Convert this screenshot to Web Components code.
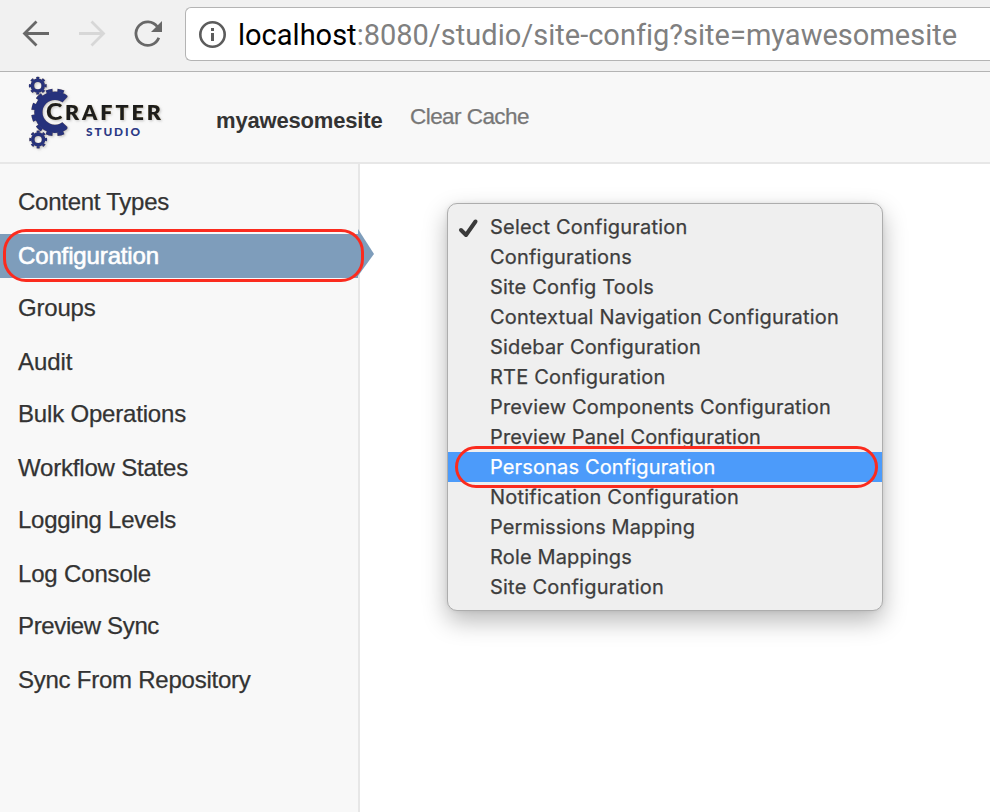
<!DOCTYPE html>
<html lang="en">
<head>
<meta charset="utf-8">
<title>Crafter Studio</title>
<style>
html,body{margin:0;height:812px;overflow:hidden;background:#fff}
</style>
</head>
<body>
<studio-page></studio-page>
<script>
const define = (name, html, extra) => customElements.define(name, class extends HTMLElement {
  constructor() {
    super();
    const t = document.createElement('template');
    t.innerHTML = html;
    this.attachShadow({mode: 'open'}).append(t.content.cloneNode(true));
  }
  connectedCallback() { if (extra) extra(this); }
});

// One line of text whose tracking is set so that it fills the given width.
define('tracked-text', `<style>
:host{display:inline-block;white-space:pre}
</style><span><slot></slot></span>`, el => {
  const want = parseFloat(el.getAttribute('width'));
  const span = el.shadowRoot.querySelector('span');
  requestAnimationFrame(() => {
    const n = el.textContent.length;
    span.style.letterSpacing = ((want - span.getBoundingClientRect().width) / n).toFixed(3) + 'px';
  });
});

define('highlight-ring', `<style>
:host{position:absolute;box-sizing:border-box;border:3px solid #fb2b1e;pointer-events:none;z-index:3}
</style>`);

define('browser-bar', `<style>
:host{display:flex;box-sizing:border-box;height:72px;background:#f1f1f1;border-bottom:1px solid #b4b4b4;padding:7px 0 0 0;font-family:Roboto,sans-serif}
svg{display:block;flex:none}
.nav{width:185px;height:54px}
.field{flex:1;display:flex;box-sizing:border-box;height:54px;background:#fff;border:1px solid #b4b4b4;border-right:0;border-radius:6px 0 0 6px;font-size:29px;line-height:54px;color:#808080}
.info{width:52px;height:52px}
b{font-weight:400;color:#000}
</style>
<svg class="nav" viewBox="0 7 185 54" fill="none" stroke-width="2.8">
<path d="M49 33.5H25M36.5 21.5L24.5 33.5L36.5 45.5" stroke="#686868"/>
<path d="M79 33.5H103M91.5 21.5L103.5 33.5L91.5 45.5" stroke="#d7d7d7"/>
<path d="M157.2 26.5A11.8 11.8 0 1 0 158.8 37.8" stroke="#686868" stroke-width="2.8"/>
<path d="M162 21V32H151Z" fill="#686868"/>
</svg>
<div class="field">
<svg class="info" viewBox="186 8 52 52"><circle cx="212.5" cy="34.5" r="12.2" fill="none" stroke="#5c5c5c" stroke-width="2.6"/><path d="M211 28h3v3h-3zM211 33h3v8h-3z" fill="#5c5c5c"/></svg>
<tracked-text width="718">​<b>localhost</b>:8080/studio/site-config?site=myawesomesite</tracked-text>
</div>`.replace('\u200b', ''));

define('crafter-logo', `<style>
:host{display:block;width:180px;height:90px}
svg{display:block}
text{font-family:Lato,sans-serif;font-weight:900}
</style>
<svg width="180" height="90" viewBox="0 72 180 90">
<defs>
<filter id="s" x="-20%" y="-20%" width="150%" height="150%"><feDropShadow dx="0" dy="0" stdDeviation=".6" flood-color="#9b8e62" flood-opacity=".8"/><feDropShadow dx="1.2" dy="1.2" stdDeviation=".8" flood-color="#777" flood-opacity=".35"/></filter>
<clipPath id="c"><path d="M25 80H64L67.5 97L61 104L55 112L61 121L67.5 127L64 145H25Z"/></clipPath>
</defs>
<g filter="url(#s)"><g fill="none" stroke="#28337b">
<g clip-path="url(#c)"><circle cx="55" cy="112.3" r="16.6" stroke-width="8.4"/><circle cx="55" cy="112.3" r="22" stroke-width="3.6" pathLength="120" stroke-dasharray="5.6 4.4" stroke-dashoffset="-2.2"/></g>
<circle cx="37.8" cy="85.7" r="5.4" stroke-width="3.6"/><circle cx="37.8" cy="85.7" r="7.8" stroke-width="2.2" pathLength="80" stroke-dasharray="5 5" stroke-dashoffset="2.5"/>
<circle cx="38.2" cy="139.5" r="5.4" stroke-width="3.6"/><circle cx="38.2" cy="139.5" r="7.8" stroke-width="2.2" pathLength="80" stroke-dasharray="5 5" stroke-dashoffset="2.5"/>
</g></g>
<g filter="url(#s)" fill="#1d1d1b"><text x="45.9" y="120" font-size="22.5" textLength="16.4" lengthAdjust="spacingAndGlyphs">C</text><text x="65" y="119.8" font-size="21.5" textLength="96" style="font-weight:800">RAFTER</text></g>
<text x="86" y="136.4" font-size="11.8" textLength="54" fill="#2b3a85">STUDIO</text>
</svg>`);

define('studio-header', `<style>
:host{display:flex;box-sizing:border-box;height:92px;background:#f8f8f8;border-bottom:2px solid #e7e7e7;font-family:"Liberation Sans",sans-serif;font-size:22px}
.logo{width:216px}
.site{font-weight:700;color:#333;width:194px;padding-top:36px;line-height:26px}
.cache{color:#777;padding-top:32px;line-height:26px;-webkit-text-stroke:.25px #777;font-size:22.5px}
</style>
<crafter-logo class="logo"></crafter-logo>
<div class="site"><tracked-text width="166.5">myawesomesite</tracked-text></div>
<div class="cache"><tracked-text width="119">Clear Cache</tracked-text></div>`);

define('nav-item', `<style>
:host{display:block;box-sizing:border-box;height:54px;padding:5px 0;color:#333;-webkit-text-stroke:.25px #333}
:host([short]){height:52px;padding:3px 0 5px}
div{position:relative;height:44px;line-height:44px;padding-left:18px}
:host([active]) div{background:#7e9dbb;color:#fff;-webkit-text-stroke:.6px #fff}
:host([active]) div::after{content:"";position:absolute;left:358px;top:-5px;width:16px;height:47px;background:#7e9dbb;clip-path:polygon(0 0,100% 53%,0 100%)}
</style><div><slot></slot></div>`);

define('side-nav', `<style>
:host{display:block;box-sizing:border-box;position:relative;width:360px;height:648px;background:#f8f8f8;border-right:2px solid #e7e7e7;padding-top:13px;font:24px "Liberation Sans",sans-serif}
highlight-ring{left:3px;top:65px;width:361px;height:53px;border-radius:23px}
</style><slot></slot><highlight-ring></highlight-ring>`, el => {
  const items = [['Content Types',151],['Configuration',141],['Groups',77.5],['Audit',54.5],['Bulk Operations',168],['Workflow States',170],['Logging Levels',158],['Log Console',133],['Preview Sync',141],['Sync From Repository',232.5]];
  el.innerHTML = items.map(([t, w], i) => `<nav-item ${i == 1 ? 'active' : ''} ${i % 2 == 0 ? 'short' : ''}><tracked-text width="${w}">${t}</tracked-text></nav-item>`).join('');
});

define('menu-option', `<style>
:host{display:flex;height:30px;line-height:30px;color:#3d3d3d;-webkit-text-stroke:.25px currentColor}
:host([selected]){background:#4c9bfa;color:#fff}
.mark{width:42px;height:30px}
svg{display:none}
:host([checked]) svg{display:block}
</style><div class="mark"><svg width="42" height="30" viewBox="448 212 42 30"><path d="M461 230L466 235L475.5 221.5" fill="none" stroke="#3a3a3a" stroke-width="4"  stroke-linecap="round" stroke-linejoin="round"/></svg></div><slot></slot>`);

define('config-menu', `<style>
:host{display:block;box-sizing:border-box;position:relative;width:436px;height:408px;background:#efefef;border:1px solid #adadad;border-radius:10px;padding-top:8px;box-shadow:0 10px 24px rgba(0,0,0,.28),0 0 4px rgba(0,0,0,.08);font:20px Inter,sans-serif}
highlight-ring{left:7px;top:242px;width:423px;height:42px;border-radius:21px}
</style><slot></slot><highlight-ring></highlight-ring>`, el => {
  const items = [['Select Configuration',197.5],['Configurations',142],['Site Config Tools',164],['Contextual Navigation Configuration',349],['Sidebar Configuration',211],['RTE Configuration',175.5],['Preview Components Configuration',341],['Preview Panel Configuration',271],['Personas Configuration',225.5],['Notification Configuration',249],['Permissions Mapping',205],['Role Mappings',142],['Site Configuration',174]];
  el.innerHTML = items.map(([t, w], i) => `<menu-option ${i == 0 ? 'checked' : ''} ${i == 8 ? 'selected' : ''}><tracked-text width="${w}">${t}</tracked-text></menu-option>`).join('');
});

define('studio-page', `<style>
:host{display:block;width:990px;height:812px;overflow:hidden;background:#fff}
main{display:flex}
section{flex:1;padding:39px 0 0 87px}
</style>
<browser-bar></browser-bar><studio-header></studio-header>
<main><side-nav></side-nav><section><config-menu></config-menu></section></main>`);
</script>
</body>
</html>
